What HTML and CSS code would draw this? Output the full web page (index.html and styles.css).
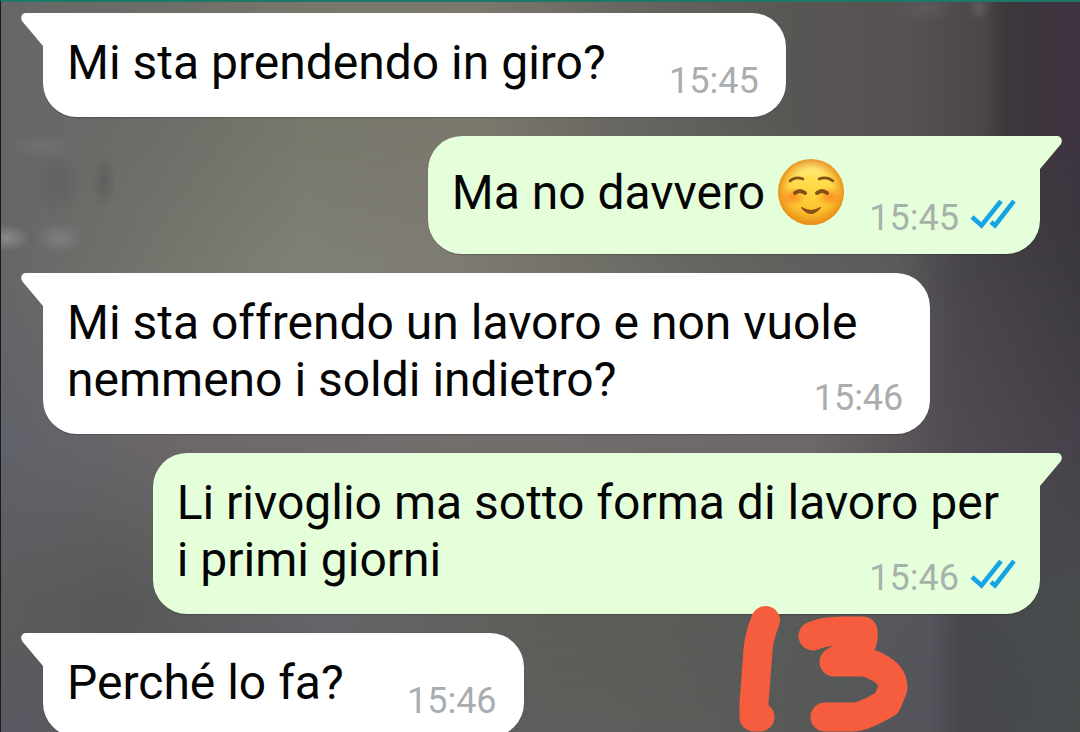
FILE: index.html
```
<!DOCTYPE html>
<html lang="it">
<head>
<meta charset="utf-8">
<title>Chat</title>
<link rel="stylesheet" href="styles.css">
</head>
<body>
<svg class="defs" width="0" height="0" aria-hidden="true">
  <defs>
    <symbol id="tail" viewBox="0 0 22 33"><path d="M22 0H5C1 0-1 4 1 8L22 33Z"/></symbol>
    <symbol id="ticks" viewBox="0 0 48 32"><path d="M3 20L12.500 28.500L32 4M22 25L26 28.500L45 4" fill="none" stroke="#16a5e4" stroke-width="4.500"/></symbol>
  </defs>
</svg>
<main class="chat">
  <div class="wall" aria-hidden="true">
    <div class="band band-top"></div>
    <div class="band band-upper"></div>
    <div class="band band-middle"></div>
    <div class="band band-lower"></div>
    <div class="spots"></div>
  </div>
  <article class="bubble received">
    <svg class="tail"><use href="#tail"/></svg>
    <p class="text short">Mi sta prendendo in giro?</p>
    <div class="meta"><time>15:45</time></div>
  </article>
  <article class="bubble sent">
    <svg class="tail"><use href="#tail"/></svg>
    <p class="text short with-emoji">Ma no davvero
      <svg class="emoji" viewBox="0 0 68 68" role="img" aria-label="Faccina sorridente">
        <defs>
          <linearGradient id="face" x1="0" y1="0" x2="0" y2="1"><stop offset="0" stop-color="#fff3a0"/><stop offset=".3" stop-color="#ffe050"/><stop offset=".7" stop-color="#fdc832"/><stop offset="1" stop-color="#f4a61e"/></linearGradient>
          <radialGradient id="rim"><stop offset=".65" stop-color="#f09a20" stop-opacity="0"/><stop offset="1" stop-color="#e48a18" stop-opacity=".9"/></radialGradient>
          <radialGradient id="cheek"><stop offset="0" stop-color="#fb8624" stop-opacity=".9"/><stop offset="1" stop-color="#fb8624" stop-opacity="0"/></radialGradient>
        </defs>
        <circle cx="34" cy="34" r="33" fill="url(#face)"/>
        <circle cx="34" cy="34" r="33" fill="url(#rim)"/>
        <ellipse cx="15" cy="39" rx="14" ry="10" fill="url(#cheek)"/>
        <ellipse cx="53" cy="39" rx="14" ry="10" fill="url(#cheek)"/>
        <g fill="none" stroke="#865016" stroke-linecap="round">
          <path stroke-width="2.500" d="M13 23Q18 18 26 21M42 21Q50 18 56 23"/>
          <path stroke-width="4" d="M18 35Q23 31 28 35M40 35Q45 31 50 35"/>
        </g>
        <path d="M25 49Q34 55 43 49Q45 49 43 51Q34 61 25 51Q23 49 25 49Z" fill="#865016"/>
      </svg>
    </p>
    <div class="meta"><time>15:45</time><svg class="ticks" role="img" aria-label="Letto"><use href="#ticks"/></svg></div>
  </article>
  <article class="bubble received">
    <svg class="tail"><use href="#tail"/></svg>
    <p class="text">Mi sta offrendo un lavoro e non vuole nemmeno i soldi indietro?</p>
    <div class="meta"><time>15:46</time></div>
  </article>
  <article class="bubble sent">
    <svg class="tail"><use href="#tail"/></svg>
    <p class="text">Li rivoglio ma sotto forma di lavoro per i&nbsp;primi giorni</p>
    <div class="meta"><time>15:46</time><svg class="ticks" role="img" aria-label="Letto"><use href="#ticks"/></svg></div>
  </article>
  <article class="bubble received">
    <svg class="tail"><use href="#tail"/></svg>
    <p class="text short">Perché lo fa?</p>
    <div class="meta"><time>15:46</time></div>
  </article>
  <svg class="marker" viewBox="730 600 190 140" role="img" aria-label="13">
    <g fill="none" stroke="#f65c3e" stroke-width="29" stroke-linecap="round" stroke-linejoin="round">
      <path d="M765.500 620.500Q759 637 758 650L754 703V717H760"/>
      <path d="M813 636Q824 631 842 631H863Q865 647 851 652L834 662H858Q869 661 881 669Q893 676 893 688L887 703Q862 718 852 717H825"/>
    </g>
  </svg>
</main>
</body>
</html>
```
FILE: styles.css
```
* { box-sizing: border-box; }

body {
  margin: 0;
  font-family: Roboto, "Liberation Sans", sans-serif;
  color: #050505;
}

.defs { position: absolute; }

.chat {
  position: relative;
  isolation: isolate;
  display: flex;
  flex-direction: column;
  align-items: flex-start;
  gap: 19px;
  height: 100vh;
  padding: 11px 40px 0 42px;
  overflow: hidden;
  border-top: 2px solid #1f7767;
  border-left: 1px solid #1b1b1b;
}

/* Blurred wallpaper: stacked tonal bands that fade into each other */
.wall {
  position: absolute;
  inset: 0;
  z-index: -1;
  background: linear-gradient(90deg, #5a5961 0%, #5c5c5e 30%, #605e5c 56%, #575957 75%, #54545c 86%, #46474c 89%, #484c4d 100%);
}

.band, .spots { position: absolute; inset: 0; }

.band-lower {
  background: linear-gradient(90deg, #5b5c5c 0%, #565858 11%, #646568 30%, #5e5e59 50%, #575a58 75%, #55565d 86%, #47484d 89%, #484c4d 100%);
  mask-image: linear-gradient(#000 85%, transparent 98%);
}

.band-middle {
  background: linear-gradient(90deg, #60626a 0%, #6b6769 14%, #746e6d 42%, #6d6869 75%, #514c52 88%, #46414a 100%);
  mask-image: linear-gradient(#000 60%, transparent 83%);
}

.band-upper {
  background: linear-gradient(90deg, #666667 0%, #74756d 15%, #808076 28%, #7e7c73 42%, #666560 65%, #5c5a5c 83%, #48454a 89%, #3b383e 100%);
  mask-image: linear-gradient(#000 36%, transparent 60%);
}

.band-top {
  background: linear-gradient(90deg, #666667 0%, #6c6d68 14%, #77776c 28%, #7b786d 44%, #6a6862 56%, #575654 74%, #585252 83%, #4c4649 91%, #3e373c 93%, #3e3442 100%);
  mask-image: linear-gradient(#000 17%, transparent 36%);
}

.band-top { z-index: 4; }
.band-upper { z-index: 3; }
.band-middle { z-index: 2; }
.band-lower { z-index: 1; }

.spots {
  z-index: 5;
  background:
    radial-gradient(ellipse 24px 14px at 5px 236px, #97979cbb, transparent),
    radial-gradient(ellipse 26px 16px at 58px 236px, #8a8a8c99, transparent),
    radial-gradient(ellipse 12px 28px at 103px 180px, #55555599, transparent),
    radial-gradient(ellipse 26px 32px at 56px 182px, #58585a88, transparent),
    radial-gradient(ellipse 36px 12px at 40px 144px, #77777988, transparent),
    radial-gradient(ellipse 30px 16px at 925px 6px, #67626788, transparent),
    radial-gradient(ellipse 12px 14px at 978px 6px, #69666c99, transparent);
}

.bubble {
  --fill: #fff;
  position: relative;
  display: grid;
  max-width: 89%;
  padding: 21px 27px 15px 24px;
  border-radius: 34px;
  background: var(--fill);
  box-shadow: 0 1px 1px #0003;
}

.received { border-top-left-radius: 0; }

.sent {
  --fill: #e6ffdb;
  align-self: flex-end;
  padding-right: 23px;
  border-top-right-radius: 0;
}

.tail {
  position: absolute;
  top: 0;
  right: 100%;
  width: 22px;
  height: 33px;
  fill: var(--fill);
}

.sent .tail {
  right: auto;
  left: 100%;
  transform: scaleX(-1);
}

.text {
  grid-area: 1 / 1;
  margin: 0 0 11px;
  font-size: 48px;
  line-height: 57px;
}

.short { padding-right: 153px; }

.with-emoji {
  padding-right: 172px;
  line-height: 71px;
}

.emoji {
  width: 68px;
  height: 68px;
  margin: -6px 0;
  vertical-align: -11px;
}

.meta {
  grid-area: 1 / 1;
  place-self: end;
  display: flex;
  align-items: flex-start;
  gap: 10px;
  color: #a9adaf;
  font-size: 36px;
  line-height: 42px;
}

.sent .meta { color: #a9b1ab; }

.ticks {
  width: 48px;
  height: 32px;
}

.marker {
  position: absolute;
  top: 598px;
  left: 729px;
  width: 190px;
  height: 140px;
}
```
